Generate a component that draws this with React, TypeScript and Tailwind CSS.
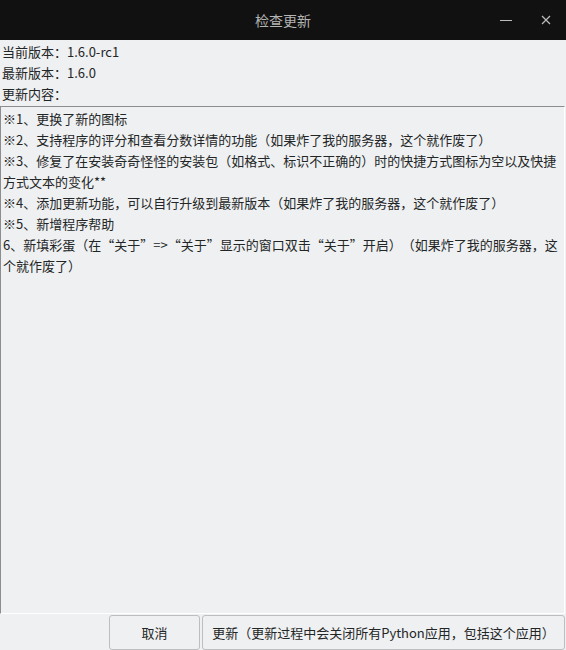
import React from "react";

const lines = [
  "※1、更换了新的图标",
  "※2、支持程序的评分和查看分数详情的功能（如果炸了我的服务器，这个就作废了）",
  "※3、修复了在安装奇奇怪怪的安装包（如格式、标识不正确的）时的快捷方式图标为空以及快捷方式文本的变化**",
  "※4、添加更新功能，可以自行升级到最新版本（如果炸了我的服务器，这个就作废了）",
  "※5、新增程序帮助",
  "6、新填彩蛋（在“关于”=>“关于”显示的窗口双击“关于”开启）（如果炸了我的服务器，这个就作废了）",
];

export default function App() {
  return (
    <div
      className="w-[566px] h-[650px] flex flex-col bg-[#eff0f1] text-[#232627] text-[13px] overflow-hidden [text-spacing-trim:space-all]"
      style={{ fontFamily: '"Noto Sans CJK SC", sans-serif' }}
    >
      <div className="h-[40px] bg-[#111111] flex items-center relative shrink-0">
        <div className="flex-1 text-center text-[14px] text-[#b4b4b4]">检查更新</div>
        <div className="absolute right-0 top-0 h-[40px] flex items-center">
          <div className="w-[40px] flex justify-center">
            <div className="w-[12px] h-[1px] bg-[#bdbdbd]" />
          </div>
          <div className="w-[40px] flex justify-center">
            <svg width="10" height="10" viewBox="0 0 10 10">
              <path d="M1 1L9 9M9 1L1 9" stroke="#bdbdbd" strokeWidth="1.2" />
            </svg>
          </div>
        </div>
      </div>
      <div className="flex flex-col leading-[21px] pt-[1px] pl-[2px]">
        <div>当前版本：1.6.0-rc1</div>
        <div>最新版本：1.6.0</div>
        <div>更新内容：</div>
      </div>
      <div className="flex-1 mt-[2px] mr-[1px] border-t border-l border-t-[#8c8d8e] border-l-[#8c8d8e] border-r border-b border-r-[#ffffff] border-b-[#ffffff] bg-[#eff0f1] px-[2px] pt-[1px] leading-[21px] break-all">
        {lines.map((l, i) => (
          <div key={i}>{l}</div>
        ))}
      </div>
      <div className="h-[36px] flex justify-end items-stretch gap-[2px] pt-[1px] pr-[1px] shrink-0">
        <button className="w-[91px] border border-[#bcbebf] rounded-[3px] bg-[#eff0f1] text-[#232627] text-[13px]">
          取消
        </button>
        <button className="w-[363px] border border-[#bcbebf] rounded-[3px] bg-[#eff0f1] text-[#232627] text-[13px] whitespace-nowrap">
          更新（更新过程中会关闭所有Python应用，包括这个应用）
        </button>
      </div>
    </div>
  );
}
